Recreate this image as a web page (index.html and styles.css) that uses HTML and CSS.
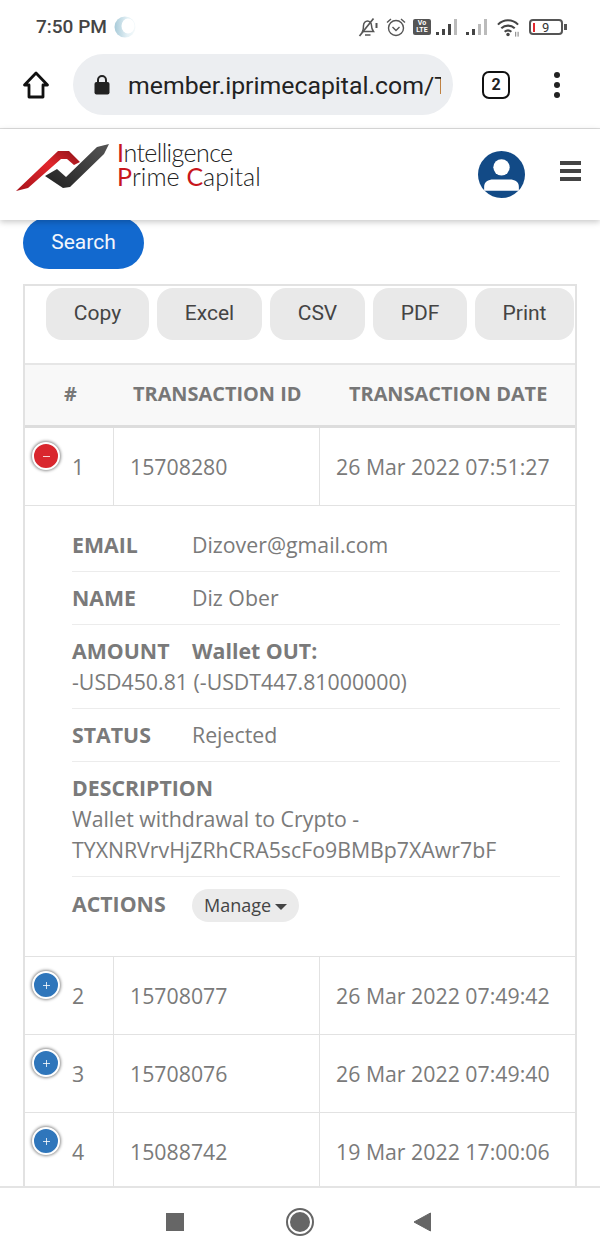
FILE: index.html
```html
<!DOCTYPE html>
<html lang="en">
<head>
<meta charset="utf-8">
<title>Transactions</title>
<link rel="stylesheet" href="styles.css">
</head>
<body>
<div class="status">
  <div class="status-left">
    <span class="clock">7:50 PM</span>
    <svg class="moon" viewBox="0 0 22 22">
      <defs><linearGradient id="moonfill" x1="0" y1="0" x2="1" y2="0"><stop offset="0" stop-color="#a9cbd9"/><stop offset=".6" stop-color="#e3f0f5"/><stop offset="1" stop-color="#f6fafb"/></linearGradient></defs>
      <circle cx="11" cy="11" r="10.500" fill="url(#moonfill)"/><ellipse cx="14" cy="10" rx="6.500" ry="7.500" fill="#fff"/>
    </svg>
  </div>
  <div class="status-right">
    <svg class="ic-bell" viewBox="0 0 20 20" fill="none" stroke="#555" stroke-width="1.500"><path d="M4.500 14.500c1-2 1-4 1-6 0-2.500 2-4.500 4-4.500s4 2 4 4.500c0 2 .5 4 2 6z"/><path d="M7 18h5.500"/><path d="M1.500 19 15.500 1.500" stroke-width="1.700"/><path d="M18.500 6v5" stroke-width="2"/></svg>
    <svg class="ic-alarm" viewBox="0 0 20 20" fill="none" stroke="#555" stroke-width="1.400"><circle cx="10" cy="11" r="7.500"/><path d="M6.500 10 10 13.500l3.500-3.500M1 5.500 5 2M19 5.500 15 2"/></svg>
    <span class="volte"><span>Vo</span><span>LTE</span></span>
    <svg class="ic-signal" viewBox="0 0 22 16"><rect x="0" y="13" width="3" height="3" fill="#444"/><rect x="6" y="10" width="3" height="6" fill="#444"/><rect x="12" y="5" width="3" height="11" fill="#444"/><rect x="18" y="0" width="3" height="16" fill="#bbb"/></svg>
    <svg class="ic-signal ic-signal-2" viewBox="0 0 22 16"><rect x="0" y="13" width="3" height="3" fill="#444"/><rect x="6" y="10" width="3" height="6" fill="#444"/><rect x="12" y="5" width="3" height="11" fill="#bbb"/><rect x="18" y="0" width="3" height="16" fill="#bbb"/></svg>
    <svg class="ic-wifi" viewBox="0 0 24 19" fill="none" stroke="#444" stroke-width="2.200"><path d="M1 6.500c6-6 15-6 21 0M4.500 10.300c4-3.700 10-3.700 14 0M8 14c2-1.700 5-1.700 7 0"/><circle cx="11.500" cy="16.800" r="1.800" fill="#444" stroke="none"/><path d="M19.500 14v5M22 14v5" stroke-width="1" stroke="#777"/></svg>
    <span class="battery"><span class="battery-low"></span><span class="battery-num">9</span></span>
    <span class="battery-tip"></span>
  </div>
</div>

<div class="toolbar">
  <svg class="ic-home" viewBox="0 0 28 30" fill="none" stroke="#111" stroke-width="2.800" stroke-linejoin="round"><path d="M14 3 2.500 15H7v12h14V15h4.500z"/></svg>
  <div class="omnibox">
    <svg class="ic-lock" viewBox="0 0 16 21"><path d="M4 8V6a4 4 0 0 1 8 0v2" fill="none" stroke="#222" stroke-width="2"/><rect x="0.500" y="8" width="15" height="12.500" rx="2" fill="#222"/></svg>
    <span class="url">member.iprimecapital.com/Transactions</span>
  </div>
  <span class="tabs">2</span>
  <div class="kebab"><i></i><i></i><i></i></div>
</div>

<header class="site-head">
  <div class="brand">
    <svg class="mark" viewBox="0 0 112 50">
      <defs>
        <linearGradient id="red" x1="0" y1="1" x2="1" y2="0"><stop offset="0" stop-color="#a8121a"/><stop offset=".6" stop-color="#e2262c"/><stop offset="1" stop-color="#8c1218"/></linearGradient>
        <linearGradient id="dark" x1="0" y1="1" x2="1" y2="0"><stop offset="0" stop-color="#222"/><stop offset="1" stop-color="#555"/></linearGradient>
      </defs>
      <path d="M0 47 42 7h11l11 11-6 3-7-6H45L12 44z" fill="url(#red)"/>
      <path d="M93 0 81 3 50 33l-9-8-12 7 18 12 7-1L88 10z" fill="url(#dark)"/>
    </svg>
    <div class="brand-name">
      <div class="brand-top"><b>I</b>ntelligence</div>
      <div><b>P</b>rime <b>C</b>apital</div>
    </div>
  </div>
  <div class="head-actions">
    <svg class="avatar" viewBox="0 0 46 46"><circle cx="23" cy="23" r="23" fill="#124a86"/><circle cx="23" cy="16" r="8" fill="#fff"/><path d="M6 39v-4c0-5 4-7 9-7h16c5 0 9 2 9 7v4z" fill="#fff"/></svg>
    <div class="burger"><i></i><i></i><i></i></div>
  </div>
</header>

<main class="content">
  <button class="search">Search</button>
  <section class="panel">
    <div class="tools">
      <span class="tool tool-copy">Copy</span>
      <span class="tool tool-excel">Excel</span>
      <span class="tool tool-csv">CSV</span>
      <span class="tool tool-pdf">PDF</span>
      <span class="tool tool-print">Print</span>
    </div>
    <div class="thead">
      <div class="c1">#</div>
      <div class="c2">TRANSACTION ID</div>
      <div class="c3">TRANSACTION DATE</div>
    </div>
    <div class="row">
      <span class="toggle minus"><i></i></span>
      <div class="c1">1</div><div class="c2">15708280</div><div class="c3">26 Mar 2022 07:51:27</div>
    </div>
    <div class="detail">
      <div class="item"><b class="lab">EMAIL</b>Dizover@gmail.com</div>
      <div class="item"><b class="lab">NAME</b>Diz Ober</div>
      <div class="item"><b class="lab">AMOUNT</b><b>Wallet OUT:</b><br>-USD450.81 (-USDT447.81000000)</div>
      <div class="item"><b class="lab">STATUS</b>Rejected</div>
      <div class="item"><b>DESCRIPTION</b><br>Wallet withdrawal to Crypto -<br>TYXNRVrvHjZRhCRA5scFo9BMBp7XAwr7bF</div>
      <div class="item last"><b class="lab">ACTIONS</b><span class="manage">Manage<i class="caret"></i></span></div>
    </div>
    <div class="row">
      <span class="toggle plus"><i></i></span>
      <div class="c1">2</div><div class="c2">15708077</div><div class="c3">26 Mar 2022 07:49:42</div>
    </div>
    <div class="row">
      <span class="toggle plus"><i></i></span>
      <div class="c1">3</div><div class="c2">15708076</div><div class="c3">26 Mar 2022 07:49:40</div>
    </div>
    <div class="row">
      <span class="toggle plus"><i></i></span>
      <div class="c1">4</div><div class="c2">15088742</div><div class="c3">19 Mar 2022 17:00:06</div>
    </div>
  </section>
</main>

<nav class="navbar">
  <span class="nav-square"></span>
  <span class="nav-circle"><i></i></span>
  <svg class="nav-back" viewBox="0 0 18 20"><path d="M17.500 1v18L1 10z" fill="#666" stroke="#666" stroke-linejoin="round"/></svg>
</nav>
</body>
</html>
```

FILE: styles.css
```css
* { box-sizing: border-box; }
html, body { margin: 0; padding: 0; }
body {
  width: 600px;
  height: 1258px;
  overflow: hidden;
  background: #fff;
  display: flex;
  flex-direction: column;
  font-family: "Open Sans", sans-serif;
  color: #7a7a7a;
}

/* status bar */
.status {
  height: 44px;
  flex: none;
  padding: 9px 33px 0 36px;
  display: flex;
  justify-content: space-between;
  align-items: center;
}
.status-left { display: flex; align-items: center; gap: 7px; }
.clock { font: 500 19px Roboto, sans-serif; color: #444; }
.moon { width: 22px; height: 22px; }
.status-right { display: flex; align-items: center; margin-top: 1px; }
.ic-bell { width: 20px; height: 20px; }
.ic-alarm { width: 20px; height: 20px; margin-left: 8px; }
.volte {
  width: 18px; height: 16px; margin-left: 7px; background: #555; color: #fff; border-radius: 2px;
  font: 700 7px/7px Roboto, sans-serif; display: flex; flex-direction: column;
  align-items: center; justify-content: center;
}
.ic-signal { width: 22px; height: 16px; margin-left: 5px; }
.ic-signal-2 { margin-left: 8px; }
.ic-wifi { width: 23px; height: 19px; margin-left: 9px; }
.battery {
  width: 34px; height: 16px; margin-left: 9px; border: 2px solid #555; border-radius: 4px;
  display: flex; align-items: center;
}
.battery-low { width: 2px; height: 9px; background: #e0282e; margin-left: 2px; }
.battery-num { font: 400 13px Roboto, sans-serif; color: #333; margin-left: 7px; }
.battery-tip { width: 3px; height: 6px; margin-left: 1px; background: #555; }

/* browser toolbar */
.toolbar {
  height: 85px;
  flex: none;
  border-bottom: 1px solid #dedede;
  display: flex;
  align-items: center;
  padding: 0 0 3px 22px;
}
.ic-home { width: 28px; height: 30px; flex: none; }
.omnibox {
  width: 380px; height: 61px; margin-left: 23px; flex: none;
  background: #eceef1; border-radius: 31px;
  display: flex; align-items: center; padding: 0 0 0 21px; overflow: hidden;
}
.ic-lock { width: 16px; height: 21px; flex: none; }
.url {
  font: 400 24.800px Roboto, sans-serif; color: #222; margin-left: 18px; padding-top: 1px;
  width: 313px; overflow: hidden; white-space: nowrap;
}
.tabs {
  width: 28px; height: 28px; margin-left: 29px; flex: none;
  border: 2.500px solid #111; border-radius: 7px;
  font: 700 16px/23px Roboto, sans-serif; color: #222; text-align: center;
}
.kebab { margin-left: 44px; display: flex; flex-direction: column; gap: 4px; }
.kebab i { width: 6px; height: 6px; border-radius: 50%; background: #222; display: block; }

/* site header */
.site-head {
  height: 91px;
  flex: none;
  background: #fff;
  box-shadow: 0 2px 6px rgba(0, 0, 0, .22);
  position: relative;
  z-index: 2;
  display: flex;
  justify-content: space-between;
  align-items: center;
  padding: 0 19px 0 16px;
}
.brand { display: flex; align-items: flex-start; height: 62px; margin-top: -10px; padding-top: 5px; }
.mark { width: 112px; height: 50px; flex: none; }
.brand-name {
  font: 300 25px/24.500px Lato, sans-serif; color: #222; margin-left: -11px; margin-top: -4px;
}
.brand-top { letter-spacing: -.6px; }
.brand-name b { font-weight: 400; color: #c8161d; }
.head-actions { display: flex; align-items: center; gap: 35px; }
.avatar { width: 47px; height: 47px; }
.burger { display: flex; flex-direction: column; gap: 4px; margin-top: -7px; }
.burger i { display: block; width: 21px; height: 3.800px; background: #444; }

/* content */
.content {
  flex: 1;
  min-height: 0;
  overflow: hidden;
  padding: 0 23px;
}
.search {
  display: block;
  width: 121px; height: 52px; margin-top: -3px; padding: 0 0 3px;
  border: 0; border-radius: 26px;
  background: #1269cf; color: #f2f6fc;
  font: 400 21px Roboto, sans-serif;
}
.panel { margin-top: 15px; width: 554px; border: 2px solid #e2e2e2; border-bottom: 0; }
.tools { height: 77px; display: flex; align-items: flex-start; gap: 8px; padding: 2px 0 0 21px; }
.tool {
  height: 52px; border-radius: 16px; background: #e9e9e9; color: #444;
  font: 400 21px/50px Roboto, sans-serif; text-align: center; flex: none;
}
.tool-copy { width: 103px; }
.tool-excel { width: 105px; }
.tool-csv { width: 95px; }
.tool-pdf { width: 94px; }
.tool-print { width: 99px; }

.thead, .row { display: grid; grid-template-columns: 88px 206px 1fr; }
.thead {
  height: 65px;
  background: #f8f8f8;
  border-top: 2px solid #e6e6e6;
  border-bottom: 3px solid #ddd;
  font-size: 19.900px; font-weight: 700; color: #777; line-height: 58px;
  white-space: nowrap;
}
.thead .c1 { text-align: center; padding-left: 3px; }
.thead .c2 { padding-left: 20px; }
.thead .c3 { padding-left: 30px; }

.row {
  height: 78px;
  position: relative;
  border-bottom: 1px solid #e2e2e2;
  font-size: 21.300px; line-height: 78px; white-space: nowrap;
}
.row > div + div { border-left: 1px solid #e2e2e2; }
.row .c1 { padding-left: 47px; }
.row .c2 { padding-left: 16px; }
.row .c3 { padding-left: 16px; }

.toggle {
  position: absolute; left: 7px; top: 14px;
  width: 28px; height: 28px; border-radius: 50%;
  border: 2px solid #fff; box-shadow: 0 0 3px 1px rgba(0, 0, 0, .45);
  display: flex; align-items: center; justify-content: center;
}
.toggle.minus { background: #d9272e; }
.toggle.plus { background: #2f76bb; }
.toggle i { display: block; width: 7px; height: 1px; background: rgba(255, 255, 255, .8); position: relative; }
.plus i::after {
  content: ""; position: absolute; left: 3px; top: -3px;
  width: 1px; height: 7px; background: rgba(255, 255, 255, .8);
}

.detail { height: 451px; padding: 22.700px 15px 0 47px; border-bottom: 1px solid #e2e2e2; font-size: 21.300px; line-height: 31px; white-space: nowrap; }
.item { padding: 0 0 11px; margin-bottom: 10.200px; border-bottom: 1px solid #ececec; }
.item.last { border: 0; }
.lab { display: inline-block; width: 120px; }
.manage {
  display: inline-block; height: 33px; padding: 0 12px; border-radius: 17px;
  background: #ebebeb; color: #444; font: 400 18px/33px "Open Sans", sans-serif; vertical-align: top; margin-top: 1px;
}
.caret {
  display: inline-block; margin-left: 4px; vertical-align: middle;
  border-left: 6px solid transparent; border-right: 6px solid transparent; border-top: 6px solid #444;
}

/* android nav */
.navbar {
  height: 72px;
  flex: none;
  background: #fff;
  border-top: 2px solid #e4e4e4;
  position: relative;
  z-index: 2;
  display: flex;
  align-items: center;
  padding: 0 0 3px 166px;
}
.nav-square { width: 18px; height: 18px; background: #666; flex: none; }
.nav-circle {
  width: 28px; height: 28px; margin-left: 102px; border-radius: 50%; border: 2px solid #666;
  display: flex; align-items: center; justify-content: center; flex: none;
}
.nav-circle i { display: block; width: 20px; height: 20px; border-radius: 50%; background: #666; }
.nav-back { width: 18px; height: 20px; margin-left: 99px; flex: none; }
```
